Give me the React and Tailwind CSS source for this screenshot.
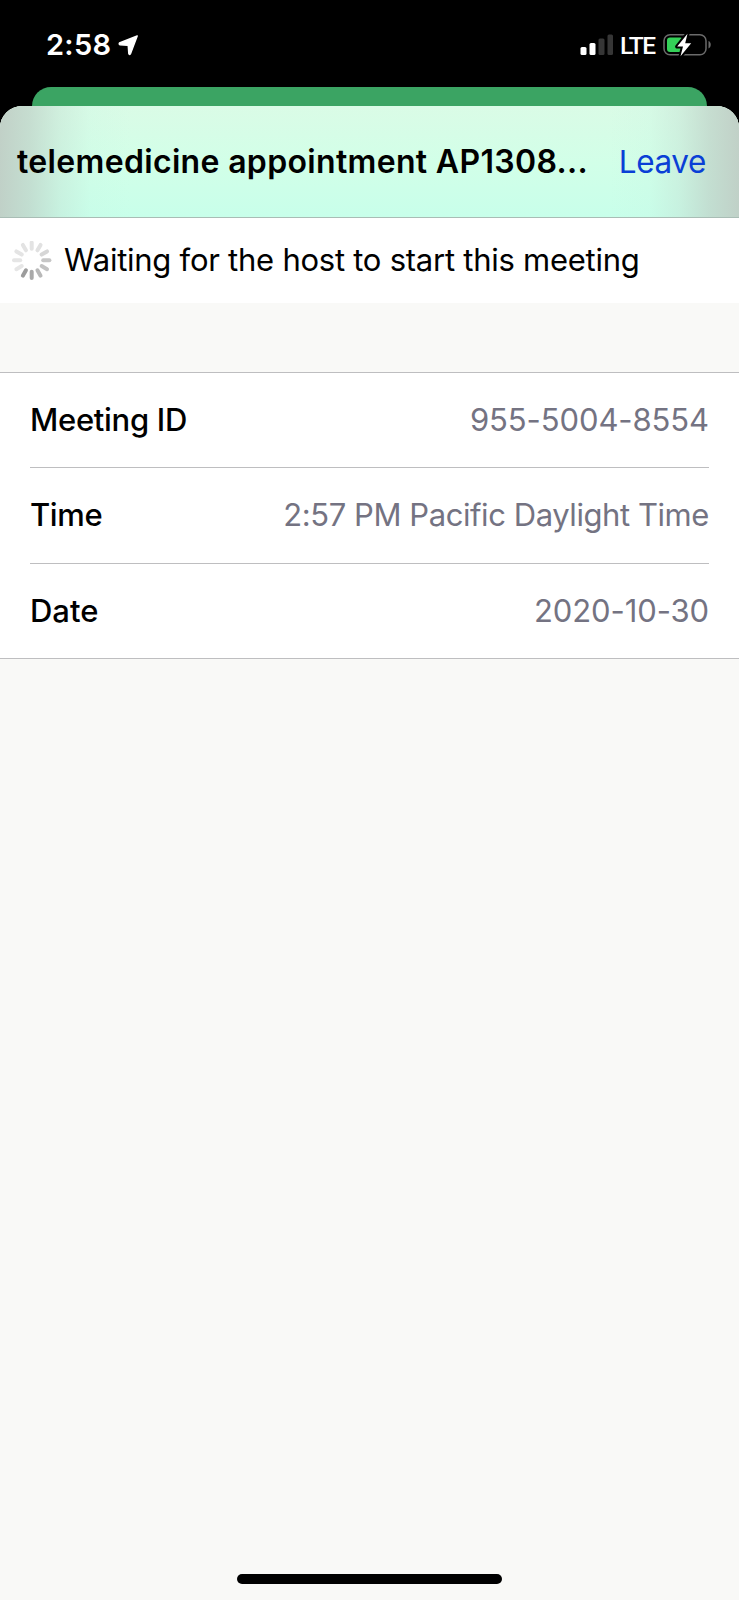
import clsx from 'clsx'

const details = [
  { label: 'Meeting ID', value: '955-5004-8554', labelClass: 'tracking-[-0.3px]', valueClass: 'tracking-[-0.1px]' },
  { label: 'Time', value: '2:57 PM Pacific Daylight Time', labelClass: 'tracking-[-0.4px]', valueClass: 'tracking-[-0.43px]' },
  { label: 'Date', value: '2020-10-30', labelClass: 'tracking-[0px]', valueClass: 'tracking-[-0.1px]' },
]

// clockwise from twelve o'clock
const spokes = ['#e3e3e3', '#e1e1e1', '#d6d6d6', '#c6c6c6', '#c2c2c2', '#b8b8b8', '#a9a9a9', '#9c9c9c', '#e6e6e6', '#e5e5e5', '#e4e4e4', '#e3e3e3']

function Spinner() {
  return (
    <svg width="40" height="40" viewBox="-19.7 -19.3 40 40">
      {spokes.map((color, i) => (
        <line
          key={i}
          y1="-11.5"
          y2="-17.7"
          stroke={color}
          strokeWidth="4"
          strokeLinecap="round"
          transform={`rotate(${i * 30})`}
        />
      ))}
    </svg>
  )
}

function StatusBar() {
  return (
    <div className="flex h-[87px] items-center justify-between pt-[3px] pl-[46px] pr-[26px] text-white">
      <div className="flex items-center">
        <span className="pb-[2px] text-[29px] font-semibold leading-none tracking-[0.3px]">2:58</span>
        <svg className="ml-[7px]" width="21" height="21" viewBox="0 0 21 21">
          <path d="M19.2 1L1.4 8Q.7 9.4 2 9.7L10.2 10.4L10.8 18.6Q11.3 20.4 12.6 18.6Z" fill="#fff" stroke="#fff" strokeWidth="1.4" strokeLinejoin="round" />
        </svg>
      </div>
      <div className="flex items-center">
        <svg width="34" height="22" viewBox="0 0 34 22">
          <rect x="0.5" y="13" width="6" height="8" rx="1.5" fill="#fff" />
          <rect x="9.5" y="9" width="6" height="12" rx="1.5" fill="#fff" />
          <rect x="18.5" y="4.5" width="6" height="16.5" rx="1.5" fill="#363636" />
          <rect x="27.5" y="0.5" width="5.5" height="20.5" rx="1.5" fill="#363636" />
        </svg>
        <span className="ml-[6px] w-[34px] pt-[2px] font-['Roboto',sans-serif] text-[24.5px] font-medium leading-none tracking-[-1.5px]">LTE</span>
        <svg className="ml-[9px]" width="50" height="26" viewBox="0 0 50 26">
          <rect x="1" y="2.7" width="42" height="20" rx="6" fill="none" stroke="#6b6b6b" strokeWidth="1.5" />
          <path d="M45.5 9v7.4c3-1.2 3-6.2 0-7.4z" fill="#6b6b6b" />
          <rect x="4" y="5.5" width="16" height="14.6" rx="3" fill="#34d158" />
          <path d="M24.5 1.8L14.2 14.6H20L17.5 24.2L28.2 11.2H22.2Z" fill="#fff" stroke="#000" strokeWidth="4" paintOrder="stroke" strokeLinejoin="round" />
        </svg>
      </div>
    </div>
  )
}

export default function App() {
  return (
    <div className="flex h-[1600px] w-[739px] flex-col bg-black font-['Inter',sans-serif] text-black">
      <StatusBar />

      {/* Screen behind the sheet */}
      <div className="mx-[32px] h-[19px] rounded-t-[19px] bg-[#3ba463]" />

      <div className="flex flex-1 flex-col overflow-hidden rounded-t-[22px] bg-[#f9f9f7]">
        <header className="flex h-[112px] items-center justify-between border-b border-[#a9bdb5] bg-[linear-gradient(90deg,#bfccc4e8_0px,#bfd2c8b8_30px,#c4e0d370_60px,#c8f4e330_90px,#c8ffea00_130px,#c8ffea00_609px,#c8f4e330_649px,#c4e0d370_679px,#bfd2c8b8_709px,#bfccc4e8_739px),linear-gradient(180deg,#dafbe6_0%,#d2ffe8_50%,#c8ffea_100%)] pl-[17px] pr-[33px] pt-[1px]">
          <h1 className="whitespace-nowrap text-[32px] font-semibold tracking-[0.33px]">telemedicine appointment AP1308...</h1>
          <button className="text-[31.5px] tracking-[-0.4px] text-[#0a3fd6]">Leave</button>
        </header>

        <div className="flex h-[85px] items-center bg-white pl-[12px]">
          <Spinner />
          <p className="ml-[12px] whitespace-nowrap text-[31px] tracking-[-0.25px]">Waiting for the host to start this meeting</p>
        </div>

        <div className="mt-[69px] border-y border-[#bebec0] bg-white px-[30px]">
          {details.map((item, i) => (
            <div
              key={item.label}
              className={clsx('flex items-center justify-between whitespace-nowrap text-[31px]', i === 0 ? 'h-[94px]' : 'border-t border-[#bebec0]', i === 1 && 'h-[96px]', i === 2 && 'h-[95px]')}
            >
              <span className={clsx('font-medium', item.labelClass)}>{item.label}</span>
              <span className={clsx('text-[#747382]', item.valueClass)}>{item.value}</span>
            </div>
          ))}
        </div>

        <div className="mx-auto mt-auto mb-[16px] h-[10px] w-[265px] rounded-full bg-black" />
      </div>
    </div>
  )
}
